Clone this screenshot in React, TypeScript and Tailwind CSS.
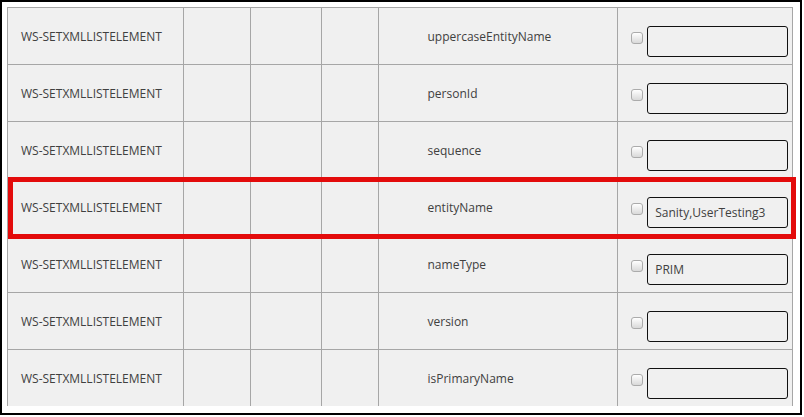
const rows = [
  { field: "uppercaseEntityName", value: "" },
  { field: "personId", value: "" },
  { field: "sequence", value: "" },
  { field: "entityName", value: "Sanity,UserTesting3" },
  { field: "nameType", value: "PRIM" },
  { field: "version", value: "" },
  { field: "isPrimaryName", value: "" },
];

function Row({ field, value }: { field: string; value: string }) {
  return (
    <div className="flex h-[57px] border-b border-[#a6a6a6] bg-[#f0f0f0]">
      {/* Step name */}
      <div className="flex w-[176px] items-center border-r border-[#a6a6a6] pl-[13px] pt-[2px]">
        WS-SETXMLLISTELEMENT
      </div>
      <div className="w-[67px] border-r border-[#a6a6a6]" />
      <div className="w-[71px] border-r border-[#a6a6a6]" />
      <div className="w-[57px] border-r border-[#a6a6a6]" />
      {/* Field */}
      <div className="flex w-[240px] items-center border-r border-[#a6a6a6] pl-[49px] pt-[2px]">
        {field}
      </div>
      {/* Value */}
      <div className="flex w-[174px] items-start pl-[13px] pt-[18px]">
        <span className="mt-[6px] block h-[12px] w-[12px] rounded-[3px] border border-[#ababab] bg-gradient-to-b from-white to-[#d9d9d9]" />
        <div className="ml-[4px] flex h-[31px] w-[141px] items-center rounded-[3px] border border-[#111] bg-[#f0f0f0] pl-[7px]">
          {value}
        </div>
      </div>
    </div>
  );
}

export default function App() {
  return (
    <div
      className="relative h-[415px] w-[802px] border-2 border-black bg-white pl-[5px] pt-[5px] text-[12px] text-[#404040]"
      style={{ fontFamily: '"Open Sans", "Noto Sans", sans-serif' }}
    >
      <div className="h-[399px] w-[786px] overflow-hidden border-l border-t border-r border-[#a6a6a6]">
        {rows.map((r) => (
          <Row key={r.field} field={r.field} value={r.value} />
        ))}
      </div>
      {/* Highlight */}
      <div className="absolute left-[6px] top-[175px] h-[62px] w-[788px] border-[5px] border-[#e30b0b]" />
    </div>
  );
}
